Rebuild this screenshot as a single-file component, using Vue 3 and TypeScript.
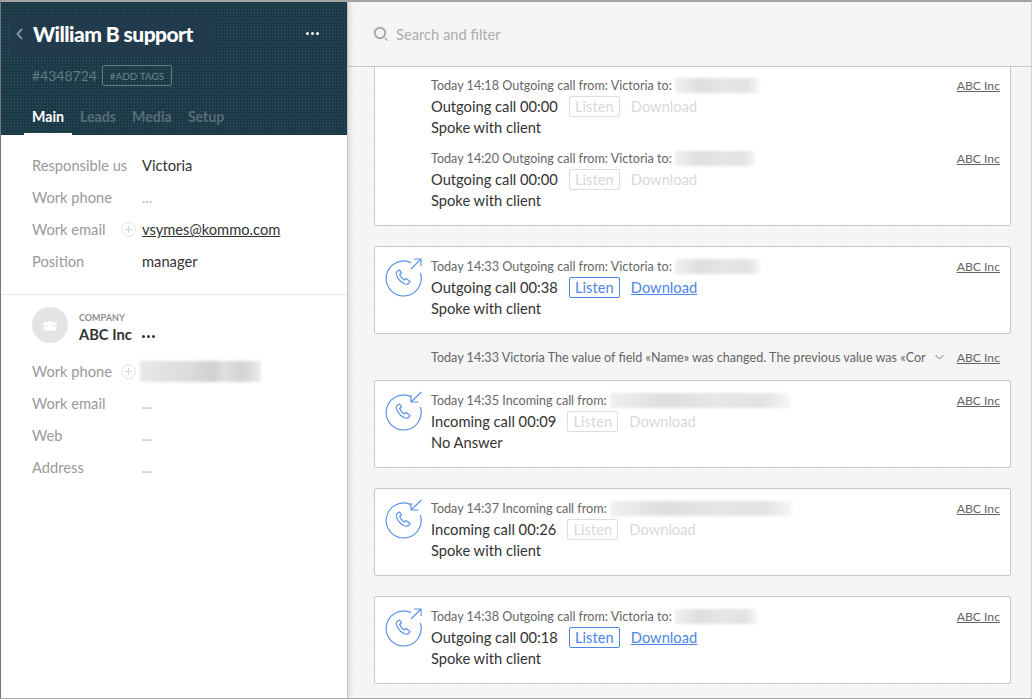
<script setup lang="ts">
interface Entry {
  time: string
  kind: 'Outgoing' | 'Incoming'
  duration: string
  active: boolean
  result: string
  blurWidth: number
}

const fields = [
  { label: 'Responsible us', value: 'Victoria', kind: 'text' },
  { label: 'Work phone', value: '...', kind: 'empty' },
  { label: 'Work email', value: 'vsymes@kommo.com', kind: 'link' },
  { label: 'Position', value: 'manager', kind: 'text' },
]
const companyFields = [
  { label: 'Work phone', kind: 'blur' },
  { label: 'Work email', kind: 'empty' },
  { label: 'Web', kind: 'empty' },
  { label: 'Address', kind: 'empty' },
]
const tabs = ['Main', 'Leads', 'Media', 'Setup']
const firstCard: Entry[] = [
  { time: '14:18', kind: 'Outgoing', duration: '00:00', active: false, result: 'Spoke with client', blurWidth: 84 },
  { time: '14:20', kind: 'Outgoing', duration: '00:00', active: false, result: 'Spoke with client', blurWidth: 80 },
]
const cardsA: Entry[] = [
  { time: '14:33', kind: 'Outgoing', duration: '00:38', active: true, result: 'Spoke with client', blurWidth: 85 },
]
const cardsB: Entry[] = [
  { time: '14:35', kind: 'Incoming', duration: '00:09', active: false, result: 'No Answer', blurWidth: 180 },
  { time: '14:37', kind: 'Incoming', duration: '00:26', active: false, result: 'Spoke with client', blurWidth: 182 },
  { time: '14:38', kind: 'Outgoing', duration: '00:18', active: true, result: 'Spoke with client', blurWidth: 82 },
]
const meta = (e: Entry) =>
  e.kind === 'Outgoing'
    ? `Today ${e.time} Outgoing call from: Victoria to:`
    : `Today ${e.time} Incoming call from:`
const ring = 'M36.3 16A17.5 17.5 0 1 1 27 5.6'
const handset = 'M15.5 13l-2.500 1.500c-1 .8-1 2-.5 3.500 1.500 4 4.500 7.500 8.500 9 1.500.5 3 .2 4-1l1-1.500-4-3-1.800 1.500c-2-1-3.500-3-4.500-5.500l1.800-1.500z'
const outArrow = 'M27 12 37 2M30 2h7v7'
const inArrow = 'M37.500 1 27 11M27 4v7h7.500'
</script>

<template>
  <div class="window">
    <aside class="side">
      <header class="head">
        <div class="title-row">
          <div class="title-box">
            <svg class="back" width="9" height="14" viewBox="0 0 9 14"><path d="M7 2 2.500 7 7 12" fill="none" stroke="#7f9298" stroke-width="2" /></svg>
            <h1>William B support</h1>
          </div>
          <span class="head-dots"><i></i><i></i><i></i></span>
        </div>
        <div class="id-row">
          <span class="lead-id">#4348724</span>
          <span class="tags">#ADD TAGS</span>
        </div>
        <nav class="tabs">
          <span v-for="(t, i) in tabs" :key="t" class="tab" :class="{ on: i === 0 }">{{ t }}</span>
        </nav>
      </header>

      <section class="fields">
        <div v-for="f in fields" :key="f.label" class="field">
          <span class="label">{{ f.label }}</span>
          <svg v-if="f.kind === 'link'" class="plus" width="15" height="15" viewBox="0 0 15 15"><circle cx="7.5" cy="7.5" r="7" fill="none" stroke="#e2e2e2" /><path d="M7.5 4v7M4 7.500h7" stroke="#d4d4d4" /></svg>
          <a v-if="f.kind === 'link'" class="mail">{{ f.value }}</a>
          <span v-else :class="f.kind === 'empty' ? 'empty' : 'value'">{{ f.value }}</span>
        </div>
      </section>

      <section class="company">
        <div class="co-head">
          <div class="avatar">
            <svg width="14" height="11" viewBox="0 0 14 11"><path d="M5 2V1h4v1h4.500v8.500H.5V2z" fill="#fff" /><path d="M1 6h4M9 6h4" stroke="#e4e4e4" /></svg>
          </div>
          <div class="co-names">
            <span class="co-cap">COMPANY</span>
            <span class="co-name">ABC Inc<span class="co-dots"><i></i><i></i><i></i></span></span>
          </div>
        </div>
        <div v-for="f in companyFields" :key="f.label" class="field">
          <span class="label">{{ f.label }}</span>
          <svg v-if="f.kind === 'blur'" class="plus" width="15" height="15" viewBox="0 0 15 15"><circle cx="7.5" cy="7.5" r="7" fill="none" stroke="#e2e2e2" /><path d="M7.5 4v7M4 7.500h7" stroke="#d4d4d4" /></svg>
          <span v-if="f.kind === 'blur'" class="smudge phone"></span>
          <span v-else class="empty">...</span>
        </div>
      </section>
    </aside>

    <main class="main">
      <div class="search">
        <svg width="17" height="17" viewBox="0 0 17 17"><circle cx="7" cy="7" r="5.200" fill="none" stroke="#a9a9a9" stroke-width="2" /><path d="M12 12l2.500 2.500" stroke="#a9a9a9" stroke-width="1.400" /></svg>
        <span>Search and filter</span>
      </div>

      <div class="feed">
        <article class="card first">
          <div v-for="e in firstCard" :key="e.time" class="entry">
            <div class="meta-row">
              <span class="meta">{{ meta(e) }}</span>
              <span class="smudge" :style="{ width: e.blurWidth + 'px' }"></span>
              <a class="co-link">ABC Inc</a>
            </div>
            <div class="call-row">
              <span>{{ e.kind }} call {{ e.duration }}</span>
              <span class="listen">Listen</span>
              <span class="download">Download</span>
            </div>
            <div class="result">{{ e.result }}</div>
          </div>
        </article>

        <article v-for="e in cardsA" :key="e.time" class="card">
          <svg class="call-ico" width="40" height="40" viewBox="0 0 40 40">
            <path :d="ring" />
            <path :d="outArrow" />
            <path :d="handset" />
          </svg>
          <div class="entry">
            <div class="meta-row">
              <span class="meta">{{ meta(e) }}</span>
              <span class="smudge" :style="{ width: e.blurWidth + 'px' }"></span>
              <a class="co-link">ABC Inc</a>
            </div>
            <div class="call-row">
              <span>{{ e.kind }} call {{ e.duration }}</span>
              <span class="listen live">Listen</span>
              <span class="download live">Download</span>
            </div>
            <div class="result">{{ e.result }}</div>
          </div>
        </article>

        <div class="note">
          <span class="note-text">Today 14:33 Victoria The value of field «Name» was changed. The previous value was «Cor</span>
          <svg width="9" height="6" viewBox="0 0 9 6"><path d="M.5 1l4 4 4-4" fill="none" stroke="#777" /></svg>
          <a class="co-link">ABC Inc</a>
        </div>

        <article v-for="e in cardsB" :key="e.time" class="card">
          <svg class="call-ico" width="40" height="40" viewBox="0 0 40 40">
            <path :d="ring" />
            <path :d="e.kind === 'Outgoing' ? outArrow : inArrow" />
            <path :d="handset" />
          </svg>
          <div class="entry">
            <div class="meta-row">
              <span class="meta">{{ meta(e) }}</span>
              <span class="smudge" :style="{ width: e.blurWidth + 'px' }"></span>
              <a class="co-link">ABC Inc</a>
            </div>
            <div class="call-row">
              <span>{{ e.kind }} call {{ e.duration }}</span>
              <span class="listen" :class="{ live: e.active }">Listen</span>
              <span class="download" :class="{ live: e.active }">Download</span>
            </div>
            <div class="result">{{ e.result }}</div>
          </div>
        </article>
      </div>
    </main>
  </div>
</template>

<style>
html, body { margin: 0; padding: 0; background: #fff; }
</style>

<style scoped>
.window {
  width: 1032px;
  height: 699px;
  box-sizing: border-box;
  border: 1px solid #d0d0d0;
  border-top: 2px solid #a3a3a3;
  border-left-color: #6f7a80;
  border-bottom-color: #a8a8a8;
  display: flex;
  overflow: hidden;
  font-family: "Lato", "Noto Sans", sans-serif;
  font-size: 14.7px;
  color: #333;
  background-color: #f4f4f4;
  background-image: radial-gradient(#fbfbfb 0.6px, transparent 0.8px);
  background-size: 3px 3px;
}
.side {
  width: 346px;
  flex: none;
  background: #fff;
  border-right: 1px solid #c4c4c4;
  box-shadow: 2px 0 5px rgba(0, 0, 0, .12);
  z-index: 2;
  display: flex;
  flex-direction: column;
}
.head {
  height: 133px;
  flex: none;
  box-sizing: border-box;
  background-color: #1d3847;
  background-image: radial-gradient(#28585c 0.6px, transparent 0.8px);
  background-size: 3px 3px;
  position: relative;
}
.title-row {
  display: flex;
  align-items: center;
  justify-content: space-between;
  padding: 13px 28px 0 8px;
}
.title-box {
  display: flex;
  align-items: center;
  width: 205px;
  height: 40px;
  box-sizing: border-box;
  padding: 0 0 3px 6px;
  gap: 9px;
  background: #213a4c;
  border-radius: 3px;
}
.title-box h1 {
  margin: 0;
  font-size: 21px;
  font-weight: 900;
  color: #fff;
  letter-spacing: -.55px;
  white-space: nowrap;
}
.head-dots { display: flex; gap: 2px; margin-bottom: 3px; }
.head-dots i { width: 3px; height: 3px; background: #fff; border-radius: 50%; }
.id-row {
  display: flex;
  align-items: center;
  gap: 5px;
  padding: 10px 0 0 31px;
}
.lead-id { font-size: 14px; color: #5f7b80; }
.tags {
  font-size: 10px;
  color: #6c868a;
  height: 21px;
  line-height: 20px;
  box-sizing: border-box;
  width: 70px;
  text-align: center;
  border: 1px solid #5f7b80;
  border-radius: 2px;
}
.tabs {
  position: absolute;
  left: 23px;
  bottom: 0;
  display: flex;
}
.tab {
  padding: 0 8px 7px;
  font-size: 14.2px;
  font-weight: 700;
  color: #566e76;
  border-bottom: 2px solid transparent;
  line-height: 18px;
}
.tab.on { color: #fff; border-bottom-color: #fff; }
.fields {
  padding: 14px 0 17px 31px;
  border-bottom: 1px solid #e6e6e6;
}
.field {
  display: flex;
  align-items: center;
  height: 32px;
  position: relative;
  padding-left: 110px;
}
.label {
  position: absolute;
  left: 0;
  color: #9a9a9a;
}
.value { color: #333; }
.empty { color: #b5b5b5; }
.mail { color: #333; text-decoration: underline; }
.plus { position: absolute; left: 89px; top: 9px; }
.company { padding: 12px 0 0 31px; }
.co-head { display: flex; align-items: center; gap: 11px; height: 36px; margin-bottom: 12px; }
.avatar {
  width: 36px;
  height: 36px;
  border-radius: 50%;
  background: #e4e4e4;
  display: flex;
  align-items: center;
  justify-content: center;
}
.co-names { display: flex; flex-direction: column; padding-top: 4px; }
.co-cap { font-size: 9px; font-weight: 700; color: #8f8f8f; line-height: 14px; }
.co-name { font-weight: 700; color: #333; line-height: 18px; }
.co-dots { display: inline-flex; gap: 2px; margin-left: 10px; vertical-align: middle; }
.co-dots i { width: 3px; height: 3px; background: #333; border-radius: 50%; }
.smudge {
  display: inline-block;
  height: 15px;
  margin-left: 3px;
  background: linear-gradient(90deg, #f0f0f0, #dedede 30%, #e6e6e6 60%, #e2e2e2 85%, #f6f6f6);
  filter: blur(1.5px);
}
.smudge.phone {
  width: 121px;
  height: 21px;
  margin-left: -2px;
  background: linear-gradient(90deg, #e8e8e8, #dcdcdc 40%, #d0d0d0 60%, #e0e0e0 70%, #d2d2d2 85%, #ededed);
}
.main {
  flex: 1;
  min-width: 0;
  display: flex;
  flex-direction: column;
}
.search {
  height: 65px;
  flex: none;
  box-sizing: border-box;
  display: flex;
  align-items: center;
  gap: 6px;
  padding-left: 25px;
  border-bottom: 1px solid #c8c8c4;
  color: #adadad;
}
.feed {
  flex: 1;
  padding: 0 20px 0 26px;
  display: flex;
  flex-direction: column;
  gap: 20px;
}
.card {
  position: relative;
  background: #fff;
  border: 1px solid #c8c8c8;
  border-radius: 2px;
  height: 88px;
  box-sizing: border-box;
  padding: 9px 10px 0 56px;
  flex: none;
}
.card.first {
  height: 159px;
  border-top: 0;
  padding-top: 8px;
  border-radius: 0 0 2px 2px;
}
.card.first .entry + .entry { margin-top: 10px; }
.entry { display: flex; flex-direction: column; }
.call-ico { position: absolute; left: 9px; top: 10px; }
.call-ico path { fill: none; stroke: #5b94ea; stroke-width: 1.2; }
.meta-row {
  display: flex;
  align-items: center;
  height: 21px;
  font-size: 12.6px;
  color: #666;
}
.co-link {
  margin-left: auto;
  font-size: 12.2px;
  color: #666;
  text-decoration: underline;
}
.call-row {
  display: flex;
  align-items: flex-start;
  height: 21px;
  line-height: 20px;
  color: #333;
}
.listen {
  box-sizing: border-box;
  width: 51px;
  height: 21px;
  line-height: 19px;
  margin-left: 11px;
  text-align: center;
  border: 1px solid #ddd;
  border-radius: 2px;
  color: #d9d9d9;
}
.listen.live { color: #4d86e6; border-color: #4d86e6; }
.download { margin-left: 11px; color: #d9d9d9; }
.download.live { color: #4d86e6; text-decoration: underline; }
.result { height: 21px; line-height: 21px; color: #333; }
.note {
  height: 0;
  display: flex;
  align-items: center;
  gap: 5px;
  padding: 0 11px 0 57px;
  font-size: 12.6px;
  color: #666;
  margin: 3px 0;
}
.note-text { white-space: nowrap; overflow: hidden; width: 499px; }
.note .co-link { margin-left: auto; }
</style>
